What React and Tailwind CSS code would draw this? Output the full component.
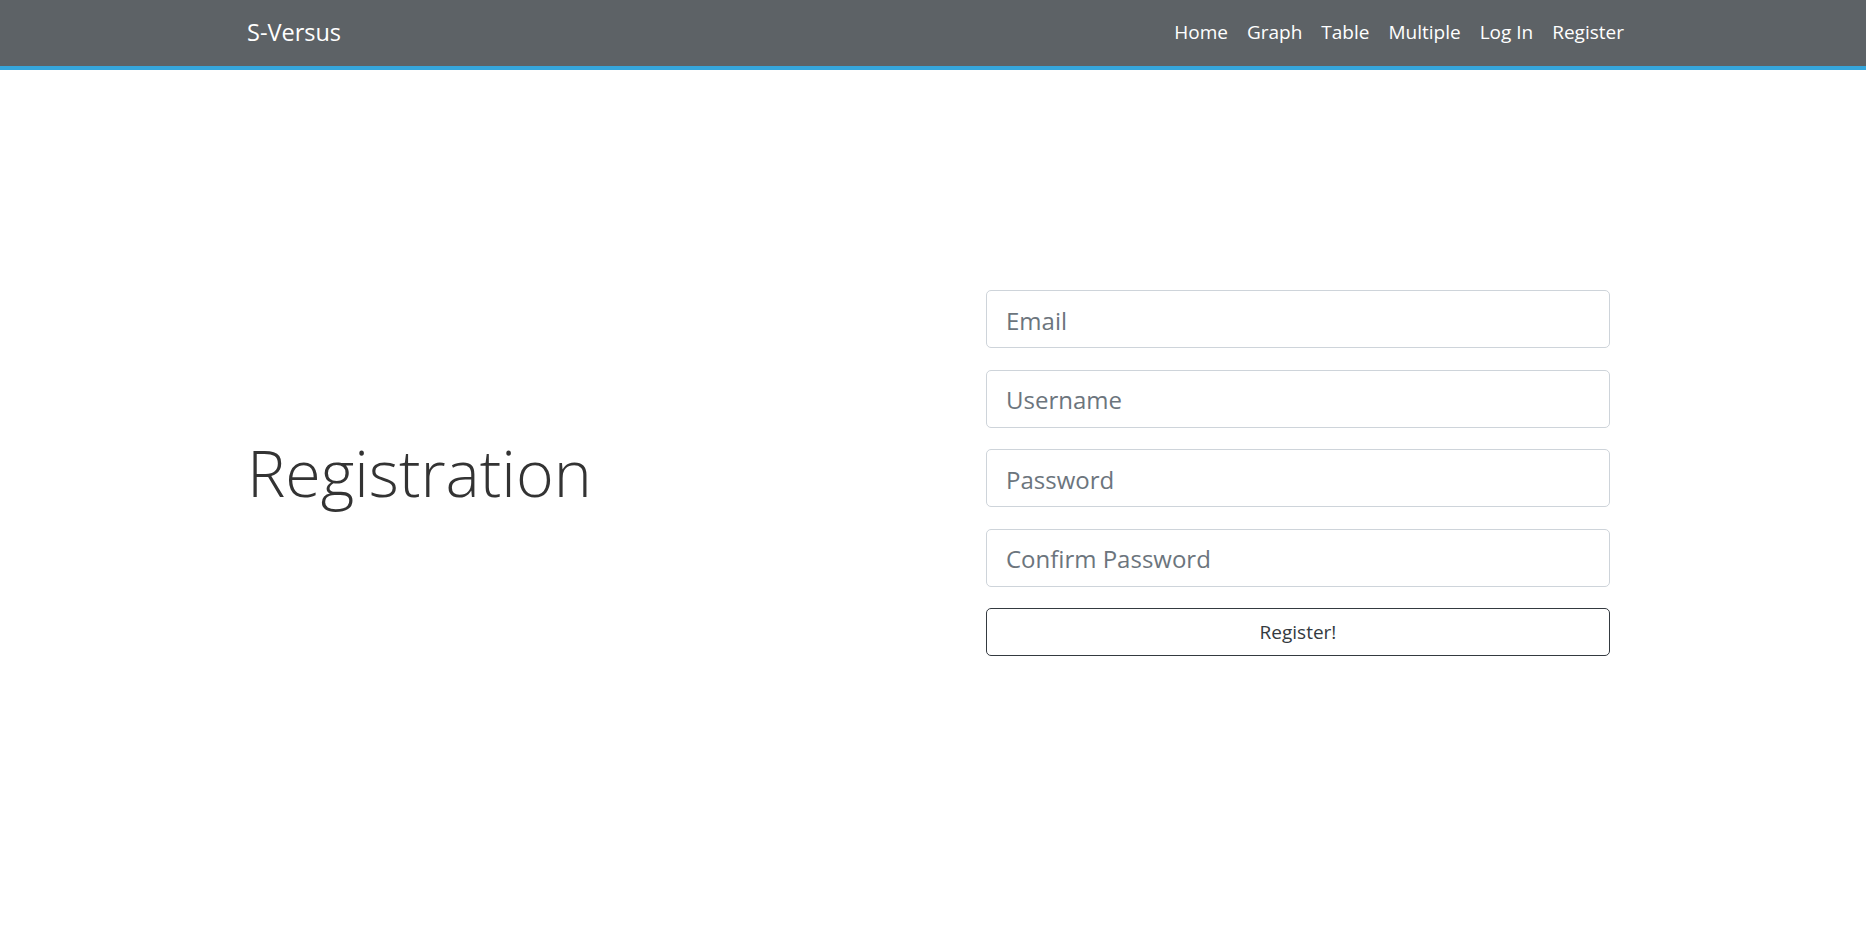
import { useState } from 'react';

const links = ['Home', 'Graph', 'Table', 'Multiple', 'Log In', 'Register'];

function Navbar() {
  return (
    <nav className="h-[70px] bg-[#5d6266] border-b-4 border-[#36a6dc]">
      <div className="ml-[247px] w-[1377px] h-full flex items-center justify-between">
        <a href="#" className="text-[23.5px] text-white leading-none pb-[1px]">S-Versus</a>
        <ul className="flex items-center gap-[19px]">
          {links.map((l) => (
            <li key={l}>
              <a href="#" className="text-[19px] text-white leading-none">{l}</a>
            </li>
          ))}
        </ul>
      </div>
    </nav>
  );
}

function Field({ placeholder, type = 'text', value, onChange }) {
  return (
    <input
      type={type}
      placeholder={placeholder}
      value={value}
      onChange={onChange}
      className="h-[58px] w-full rounded-[5px] border border-[#ced4da] bg-white px-[19px] pt-[2px] text-[24px] text-[#495057] placeholder:text-[#6c757d] outline-none"
    />
  );
}

export default function App() {
  const [form, setForm] = useState({ email: '', username: '', password: '', confirm: '' });
  const set = (k) => (e) => setForm({ ...form, [k]: e.target.value });

  return (
    <div className="min-h-[944px] bg-white font-['Open_Sans','Noto_Sans',sans-serif]">
      <Navbar />
      <main className="ml-[247px] w-[1363px] pt-[220px] flex items-center">
        <div className="w-[739px]">
          <h1 className="text-[64.5px] font-light text-[#333333] leading-[1.2]">Registration</h1>
        </div>
        <form className="w-[624px] flex flex-col gap-[21.5px]" onSubmit={(e) => e.preventDefault()}>
          <Field placeholder="Email" type="email" value={form.email} onChange={set('email')} />
          <Field placeholder="Username" value={form.username} onChange={set('username')} />
          <Field placeholder="Password" type="password" value={form.password} onChange={set('password')} />
          <Field placeholder="Confirm Password" type="password" value={form.confirm} onChange={set('confirm')} />
          <button
            type="submit"
            className="h-[48px] w-full rounded-[5px] border border-[#343a40] bg-white text-[19px] text-[#343a40]"
          >
            Register!
          </button>
        </form>
      </main>
    </div>
  );
}
